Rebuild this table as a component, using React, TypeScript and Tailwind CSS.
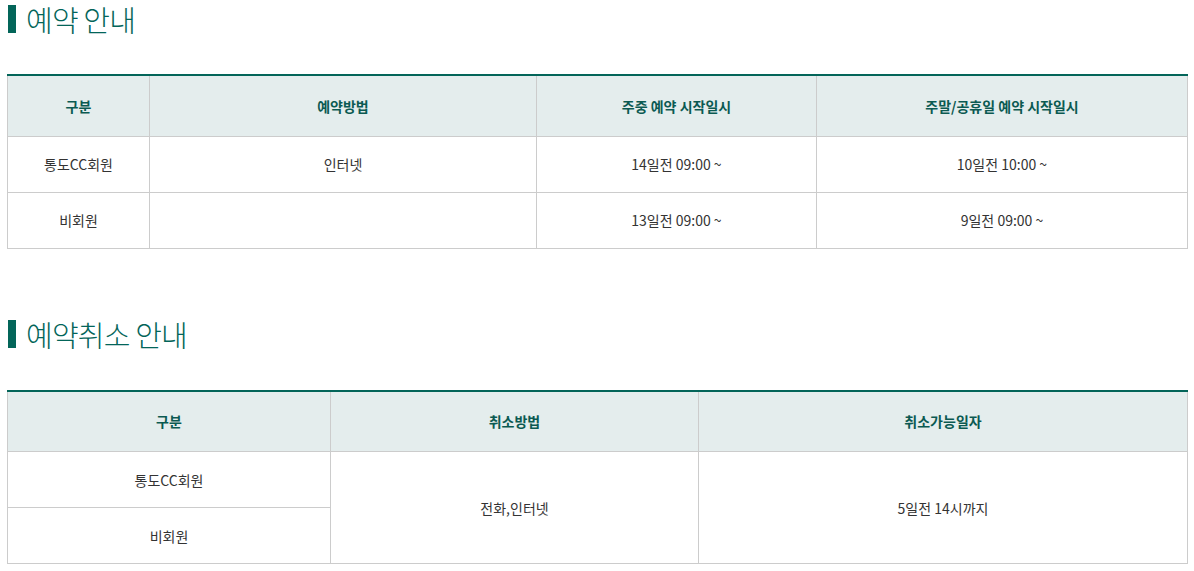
const FONT = { fontFamily: '"Noto Sans CJK KR", "Noto Sans", sans-serif' };

function Heading({ children }: { children: string }) {
  return (
    <div className="flex h-[38px] items-center">
      <span className="ml-px h-7 w-2 bg-[#036559]" />
      <h2 className="ml-[10px] text-[29px] font-light leading-[38px] tracking-[-0.8px] text-[#036559]">
        {children}
      </h2>
    </div>
  );
}

const th =
  "h-[61px] border border-[#cccccc] bg-[#e4eded] text-center text-sm font-bold text-[#0b5a52]";
const td = "h-[56px] border border-[#cccccc] text-center text-sm text-[#333333]";

export default function App() {
  return (
    <div className="bg-white px-[7px] pb-2" style={FONT}>
      {/* 예약 안내 */}
      <Heading>예약 안내</Heading>
      <table className="mt-9 w-[1180px] table-fixed border-collapse border-t-2 border-t-[#036559]">
        <colgroup>
          <col className="w-[142px]" />
          <col className="w-[387px]" />
          <col className="w-[280px]" />
          <col className="w-[371px]" />
        </colgroup>
        <thead>
          <tr>
            <th className={th}>구분</th>
            <th className={th}>예약방법</th>
            <th className={th}>주중 예약 시작일시</th>
            <th className={th}>주말/공휴일 예약 시작일시</th>
          </tr>
        </thead>
        <tbody>
          <tr>
            <td className={td}>통도CC회원</td>
            <td className={td}>인터넷</td>
            <td className={td}>14일전 09:00 ~</td>
            <td className={td}>10일전 10:00 ~</td>
          </tr>
          <tr>
            <td className={td}>비회원</td>
            <td className={td}></td>
            <td className={td}>13일전 09:00 ~</td>
            <td className={td}>9일전 09:00 ~</td>
          </tr>
        </tbody>
      </table>

      {/* 예약취소 안내 */}
      <div className="mt-[66px]">
        <Heading>예약취소 안내</Heading>
      </div>
      <table className="mt-[37px] w-[1180px] table-fixed border-collapse border-t-2 border-t-[#036559]">
        <colgroup>
          <col className="w-[323px]" />
          <col className="w-[368px]" />
          <col className="w-[489px]" />
        </colgroup>
        <thead>
          <tr>
            <th className={th}>구분</th>
            <th className={th}>취소방법</th>
            <th className={th}>취소가능일자</th>
          </tr>
        </thead>
        <tbody>
          <tr>
            <td className={td}>통도CC회원</td>
            <td className={td} rowSpan={2}>
              전화,인터넷
            </td>
            <td className={td} rowSpan={2}>
              5일전 14시까지
            </td>
          </tr>
          <tr>
            <td className={td}>비회원</td>
          </tr>
        </tbody>
      </table>
    </div>
  );
}
